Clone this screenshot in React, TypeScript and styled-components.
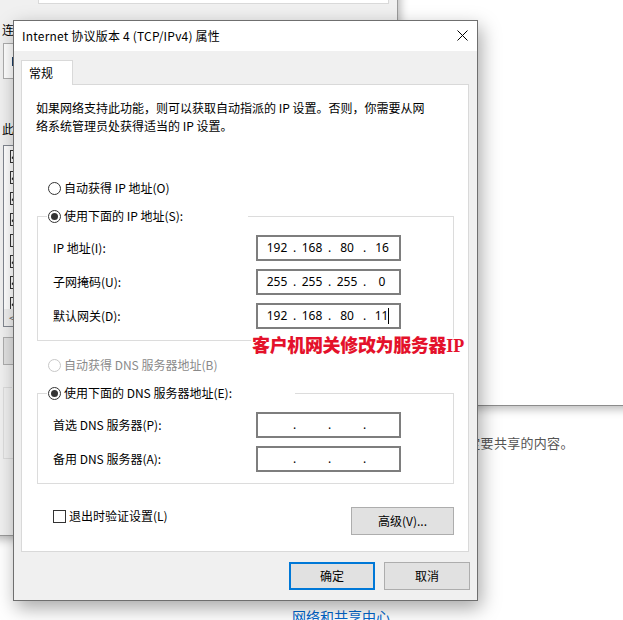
import React from "react";
import styled, { createGlobalStyle } from "styled-components";

const Global = createGlobalStyle`
  html, body { margin: 0; padding: 0; background: #fff; }
  body {
    font-family: "Noto Sans CJK SC", "Noto Sans", sans-serif;
    font-size: 12px;
    color: #000;
  }
  * { box-sizing: border-box; }
`;

const Desktop = styled.div`
  position: relative;
  width: 623px;
  height: 620px;
  overflow: hidden;
  background: #fff;
`;

/* ---------- background windows ---------- */

const SharingWindow = styled.div`
  position: absolute;
  left: 250px;
  top: 380px;
  width: 400px;
  height: 260px;
  background: #fff;
  display: flex;
  flex-direction: column;
  padding: 54px 0 0 0;
`;

const SharingText = styled.div`
  margin-left: 204px;
  font-size: 13px;
  line-height: 18px;
  letter-spacing: 0.3px;
  color: #555;
  white-space: nowrap;
`;

const SharingLink = styled.a`
  margin: 154px 0 0 42px;
  font-size: 14px;
  line-height: 20px;
  color: #0066cc;
  text-decoration: none;
  white-space: nowrap;
`;

const UpperWindow = styled.div`
  position: absolute;
  left: 380px;
  top: -10px;
  width: 260px;
  height: 416px;
  background: #fff;
  border-bottom: 1px solid #8c8c8c;
  box-shadow: 0 3px 9px rgba(0, 0, 0, 0.28);
`;

const BackWindow = styled.div`
  position: absolute;
  left: -10px;
  top: -30px;
  width: 408px;
  height: 566px;
  background: #f0f0f0;
  border-right: 1px solid #9a9a9a;
  border-bottom: 1px solid #9a9a9a;
  box-shadow: 2px 3px 9px rgba(0, 0, 0, 0.3);
  display: flex;
  flex-direction: column;
  align-items: flex-start;
  padding-left: 12px;
`;

const BackTopBox = styled.div`
  margin-left: 36px;
  width: 351px;
  height: 34px;
  background: #fff;
  border: 1px solid #d9d9d9;
  border-top: none;
`;

const BackLabel = styled.div<{ $mt: number }>`
  margin-top: ${(p) => p.$mt}px;
  line-height: 16px;
  white-space: nowrap;
`;

const AdapterBox = styled.div`
  margin: 5px 0 0 1px;
  width: 380px;
  height: 36px;
  background: #fff;
  border: 1px solid #adadad;
  display: flex;
  align-items: center;
  padding-left: 8px;
`;

const AdapterIcon = styled.span`
  width: 10px;
  height: 9px;
  background: #3a6ea5;
  border: 1px solid #1d3f66;
`;

const ItemList = styled.div`
  margin: 8px 0 0 1px;
  width: 380px;
  height: 182px;
  background: #fff;
  border: 1px solid #828790;
  display: flex;
  flex-direction: column;
  overflow: hidden;
`;

const ItemRows = styled.div`
  flex: 1;
  overflow: hidden;
  display: flex;
  flex-direction: column;
`;

const ItemRow = styled.div`
  height: 21px;
  flex: none;
  display: flex;
  align-items: center;
  padding-left: 6px;
`;

const SmallCheck = styled.span<{ $checked?: boolean }>`
  width: 13px;
  height: 13px;
  border: 1px solid #333;
  background: #fff;
  position: relative;
  flex: none;
  &::after {
    content: "";
    display: ${(p) => (p.$checked ? "block" : "none")};
    position: absolute;
    left: 3px;
    top: 0px;
    width: 4px;
    height: 8px;
    border: solid #222;
    border-width: 0 2px 2px 0;
    transform: rotate(40deg);
  }
`;

const HScroll = styled.div`
  height: 17px;
  flex: none;
  background: #f0f0f0;
  display: flex;
  align-items: center;
  padding-left: 5px;
  font-size: 10px;
  color: #606060;
`;

const BackButton = styled.div`
  margin: 10px 0 0 1px;
  width: 80px;
  height: 28px;
  background: #e1e1e1;
  border: 1px solid #adadad;
`;

const BackGroup = styled.fieldset`
  margin: 14px 0 0 1px;
  width: 380px;
  height: 80px;
  border: 1px solid #dcdcdc;
  padding: 0;
  & > legend {
    margin-left: 8px;
    padding: 0 1px;
  }
`;

/* ---------- main dialog ---------- */

const Dialog = styled.div`
  position: absolute;
  left: 13px;
  top: 20px;
  width: 465px;
  height: 581px;
  background: #f0f0f0;
  border: 1px solid #6f6f6f;
  box-shadow: 3px 7px 18px rgba(0, 0, 0, 0.35);
  display: flex;
  flex-direction: column;
`;

const TitleBar = styled.div`
  height: 30px;
  flex: none;
  background: #fff;
  display: flex;
  align-items: center;
  justify-content: space-between;
  padding: 0 9px 0 8px;
`;

const TitleText = styled.span`
  font-size: 12px;
  line-height: 16px;
  letter-spacing: 0.2px;
  white-space: nowrap;
`;

const CloseIcon = styled.svg`
  margin-bottom: 2px;
`;

const Body = styled.div`
  flex: 1;
  display: flex;
  flex-direction: column;
  padding: 9px 7px 0 7px;
`;

const TabStrip = styled.div`
  display: flex;
`;

const Tab = styled.div`
  position: relative;
  z-index: 1;
  width: 52px;
  height: 25px;
  margin-bottom: -1px;
  background: #fff;
  border: 1px solid #d9d9d9;
  border-bottom: none;
  padding-left: 7px;
  display: flex;
  align-items: center;
  line-height: 16px;
`;

const Panel = styled.div`
  width: 448px;
  height: 468px;
  background: #fff;
  border: 1px solid #d9d9d9;
  padding-top: 14px;
  display: flex;
  flex-direction: column;
`;

const Description = styled.div`
  padding: 0 14px;
  line-height: 18px;
  white-space: nowrap;
`;

const RadioRow = styled.label<{ $mt?: number; $disabled?: boolean }>`
  display: flex;
  align-items: center;
  gap: 3px;
  height: 20px;
  margin: ${(p) => p.$mt ?? 0}px 0 0 26px;
  color: ${(p) => (p.$disabled ? "#8a8a8a" : "#000")};
  white-space: nowrap;
  line-height: 16px;
`;

const RadioCircle = styled.span<{ $checked?: boolean; $disabled?: boolean }>`
  width: 13px;
  height: 13px;
  flex: none;
  border-radius: 50%;
  border: 1px solid ${(p) => (p.$disabled ? "#c8c8c8" : "#333")};
  background: #fff;
  display: flex;
  align-items: center;
  justify-content: center;
  &::after {
    content: "";
    width: 7px;
    height: 7px;
    border-radius: 50%;
    background: #333;
    display: ${(p) => (p.$checked ? "block" : "none")};
  }
`;

const Group = styled.fieldset<{ $mt: number }>`
  margin: ${(p) => p.$mt}px 14px 0 15px;
  border: 1px solid #dcdcdc;
  padding: 9px 0 11px 0;
  min-width: 0;
  display: flex;
  flex-direction: column;
  gap: 8px;
`;

const GroupLegend = styled.legend<{ $w: number }>`
  width: ${(p) => p.$w}px;
  margin-left: 9px;
  padding: 0 0 0 1px;
  height: 20px;
  display: flex;
  align-items: center;
  gap: 3px;
  white-space: nowrap;
  line-height: 16px;
`;

const FieldRow = styled.div`
  display: grid;
  grid-template-columns: 203px 145px;
  align-items: center;
  padding-left: 15px;
  height: 26px;
`;

const FieldLabel = styled.span`
  white-space: nowrap;
  line-height: 16px;
`;

const IpBox = styled.div`
  width: 145px;
  height: 26px;
  border: 2px solid #7e7e7e;
  background: #fff;
  display: flex;
  align-items: center;
  padding-left: 5px;
  font-family: "Noto Sans", "Noto Sans CJK SC", sans-serif;
  font-size: 12px;
`;

const Seg = styled.span`
  width: 28px;
  text-align: center;
  line-height: 16px;
  white-space: nowrap;
`;

const Dot = styled.span`
  width: 7px;
  text-align: center;
  line-height: 16px;
`;

const Caret = styled.span`
  display: inline-block;
  width: 1px;
  height: 16px;
  background: #000;
  vertical-align: -4px;
`;

const BottomRow = styled.div`
  margin-top: 23px;
  display: flex;
  align-items: flex-start;
  justify-content: space-between;
  padding: 0 14px 0 31px;
`;

const CheckLabel = styled.label`
  margin-top: 1px;
  display: flex;
  align-items: center;
  gap: 3px;
  line-height: 16px;
  white-space: nowrap;
`;

const CheckBox = styled.span`
  width: 13px;
  height: 13px;
  border: 1px solid #333;
  background: #fff;
  flex: none;
`;

const Button = styled.button<{ $w: number; $default?: boolean }>`
  width: ${(p) => p.$w}px;
  height: 28px;
  background: #e1e1e1;
  border: ${(p) => (p.$default ? "2px solid #0078d7" : "1px solid #adadad")};
  font-family: inherit;
  font-size: 12px;
  color: #000;
  padding: 0;
  line-height: 16px;
`;

const Footer = styled.div`
  display: flex;
  justify-content: flex-end;
  gap: 9px;
  margin-top: 10px;
`;

const Annotation = styled.div`
  position: absolute;
  left: 238px;
  top: 312px;
  font-family: "Noto Sans CJK SC", sans-serif;
  font-weight: 900;
  font-size: 18px;
  line-height: 22px;
  letter-spacing: -0.35px;
  color: #e4112b;
  white-space: nowrap;
  text-shadow: 1px 0 0 #fff, -1px 0 0 #fff, 0 1px 0 #fff, 0 -1px 0 #fff,
    1px 1px 0 #fff, -1px -1px 0 #fff, 1px -1px 0 #fff, -1px 1px 0 #fff,
    2px 0 0 #fff, -2px 0 0 #fff, 0 2px 0 #fff, 0 -2px 0 #fff;
`;

const SerifIP = styled.span`
  font-family: "Liberation Serif", serif;
  font-weight: 700;
  letter-spacing: 0;
`;

type IpProps = { parts: string[]; caret?: boolean };

const IpField: React.FC<IpProps> = ({ parts, caret }) => (
  <IpBox>
    {parts.map((p, i) => (
      <React.Fragment key={i}>
        <Seg>
          {p}
          {caret && i === 3 ? <Caret /> : null}
        </Seg>
        {i < 3 ? <Dot>.</Dot> : null}
      </React.Fragment>
    ))}
  </IpBox>
);

const listChecks = [true, true, true, true, false, true, true, true];

export default function App() {
  return (
    <Desktop>
      <Global />
      <SharingWindow>
        <SharingText>确定要共享的内容。</SharingText>
        <SharingLink href="#">网络和共享中心</SharingLink>
      </SharingWindow>
      <UpperWindow />
      <BackWindow>
        <BackTopBox />
        <BackLabel $mt={18}>连接时使用:</BackLabel>
        <AdapterBox>
          <AdapterIcon />
        </AdapterBox>
        <BackLabel $mt={42}>此连接使用下列项目(O):</BackLabel>
        <ItemList>
          <ItemRows>
            {listChecks.map((c, i) => (
              <ItemRow key={i}>
                <SmallCheck $checked={c} />
              </ItemRow>
            ))}
          </ItemRows>
          <HScroll>&lt;</HScroll>
        </ItemList>
        <BackButton />
        <BackGroup>
          <legend>描述</legend>
        </BackGroup>
      </BackWindow>

      <Dialog>
        <TitleBar>
          <TitleText>Internet 协议版本 4 (TCP/IPv4) 属性</TitleText>
          <CloseIcon width="11" height="11" viewBox="0 0 11 11">
            <path d="M0.5 0.5L10.5 10.5M10.5 0.5L0.5 10.5" stroke="#000" strokeWidth="1" />
          </CloseIcon>
        </TitleBar>
        <Body>
          <TabStrip>
            <Tab>常规</Tab>
          </TabStrip>
          <Panel>
            <Description>
              如果网络支持此功能，则可以获取自动指派的 IP 设置。否则，你需要从网
              <br />
              络系统管理员处获得适当的 IP 设置。
            </Description>

            <RadioRow $mt={43}>
              <RadioCircle />
              自动获得 IP 地址(O)
            </RadioRow>

            <Group $mt={8}>
              <GroupLegend $w={201}>
                <RadioCircle $checked />
                使用下面的 IP 地址(S):
              </GroupLegend>
              <FieldRow>
                <FieldLabel>IP 地址(I):</FieldLabel>
                <IpField parts={["192", "168", "80", "16"]} />
              </FieldRow>
              <FieldRow>
                <FieldLabel>子网掩码(U):</FieldLabel>
                <IpField parts={["255", "255", "255", "0"]} />
              </FieldRow>
              <FieldRow>
                <FieldLabel>默认网关(D):</FieldLabel>
                <IpField parts={["192", "168", "80", "11"]} caret />
              </FieldRow>
            </Group>

            <RadioRow $mt={14} $disabled>
              <RadioCircle $disabled />
              自动获得 DNS 服务器地址(B)
            </RadioRow>

            <Group $mt={8}>
              <GroupLegend $w={248}>
                <RadioCircle $checked />
                使用下面的 DNS 服务器地址(E):
              </GroupLegend>
              <FieldRow>
                <FieldLabel>首选 DNS 服务器(P):</FieldLabel>
                <IpField parts={["", "", "", ""]} />
              </FieldRow>
              <FieldRow>
                <FieldLabel>备用 DNS 服务器(A):</FieldLabel>
                <IpField parts={["", "", "", ""]} />
              </FieldRow>
            </Group>

            <BottomRow>
              <CheckLabel>
                <CheckBox />
                退出时验证设置(L)
              </CheckLabel>
              <Button $w={103}>高级(V)...</Button>
            </BottomRow>
          </Panel>
          <Footer>
            <Button $w={86} $default>
              确定
            </Button>
            <Button $w={86}>取消</Button>
          </Footer>
        </Body>
        <Annotation>
          客户机网关修改为服务器<SerifIP>IP</SerifIP>
        </Annotation>
      </Dialog>
    </Desktop>
  );
}
